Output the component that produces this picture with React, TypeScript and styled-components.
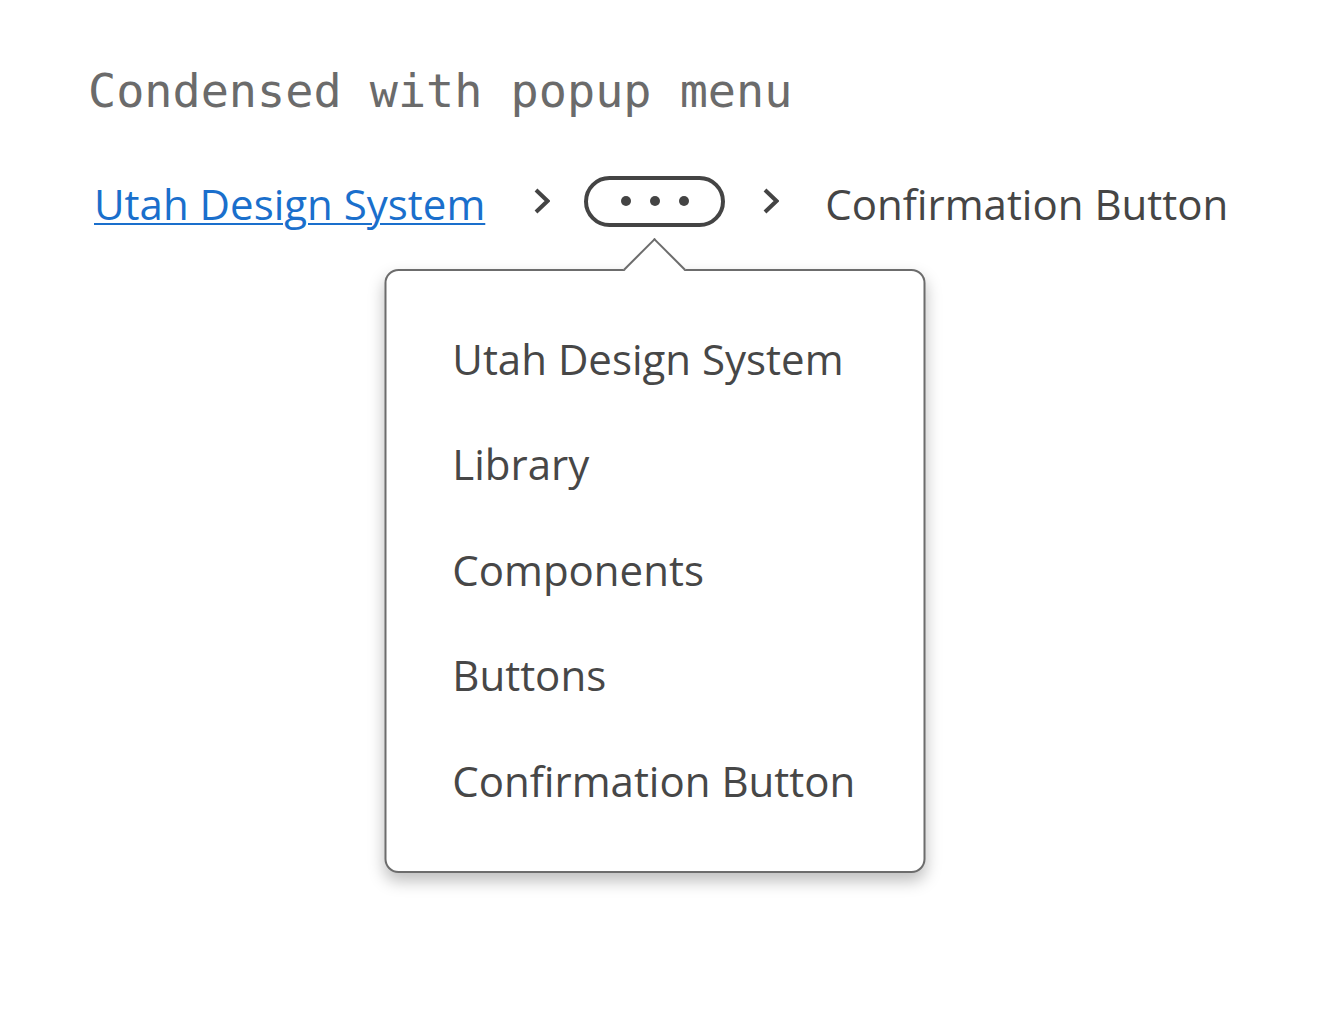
import React from "react";
import styled, { createGlobalStyle } from "styled-components";

const GlobalStyle = createGlobalStyle`
  html, body {
    margin: 0;
    padding: 0;
    background: #ffffff;
  }
  * { box-sizing: border-box; }
`;

const Page = styled.main`
  min-height: 1022px;
  padding: 68px 0 0 88px;
  font-family: "Open Sans", "Noto Sans", sans-serif;
`;

const Title = styled.h2`
  margin: 0;
  font-family: "DejaVu Sans Mono", "Liberation Mono", monospace;
  font-weight: 400;
  font-size: 46.8px;
  line-height: 46.5px;
  color: #6b6b6b;
`;

const Row = styled.nav`
  display: flex;
  align-items: center;
  margin-top: 61px;
  height: 51px;
`;

const CrumbLink = styled.a`
  font-size: 42px;
  line-height: 51px;
  color: #1a6fcc;
  text-decoration: underline;
  text-decoration-thickness: 2px;
  text-underline-offset: 3px;
  margin-left: 6px;
  padding-top: 4px;
`;

const Current = styled.span`
  font-size: 42px;
  line-height: 51px;
  color: #454545;
  padding-top: 4px;
`;

const Sep = styled.span<{ $left: number; $right: number }>`
  display: flex;
  margin: 0 ${(p) => p.$right}px 0 ${(p) => p.$left}px;
  svg { display: block; }
`;

const MoreWrap = styled.div`
  position: relative;
  height: 51px;
`;

const MoreButton = styled.button`
  display: flex;
  align-items: center;
  justify-content: center;
  gap: 19px;
  width: 141px;
  height: 51px;
  padding: 0;
  border: 4px solid #444444;
  border-radius: 26px;
  background: #ffffff;
  cursor: pointer;
`;

const Dot = styled.span`
  width: 10px;
  height: 10px;
  border-radius: 50%;
  background: #444444;
`;

const Popup = styled.div`
  position: absolute;
  top: calc(100% + 42px);
  left: 50%;
  transform: translateX(-50%);
  width: 541px;
  height: 604px;
  background: #ffffff;
  border: 2px solid #6c6c6c;
  border-radius: 14px;
  box-shadow: 0 8px 16px rgba(0, 0, 0, 0.26);
  z-index: 2;
`;

const Arrow = styled.span`
  position: absolute;
  top: -2px;
  left: 50%;
  width: 44px;
  height: 44px;
  background: #ffffff;
  border-top: 2px solid #6c6c6c;
  border-left: 2px solid #6c6c6c;
  transform: translate(-50%, -50%) rotate(45deg);
`;

const MenuList = styled.ul`
  position: relative;
  list-style: none;
  margin: 0;
  padding: 35px 0 0 66px;
`;

const MenuItem = styled.li`
  font-size: 42px;
  line-height: 105.5px;
  color: #474747;
  white-space: nowrap;
`;

const Chevron = () => (
  <svg width="16" height="26" viewBox="0 0 16 26" fill="none">
    <polyline
      points="2,2 13.5,13 2,24"
      stroke="#444444"
      strokeWidth="4"
      strokeLinecap="butt"
      strokeLinejoin="miter"
    />
  </svg>
);

const items = [
  "Utah Design System",
  "Library",
  "Components",
  "Buttons",
  "Confirmation Button",
];

export default function App() {
  return (
    <>
      <GlobalStyle />
      <Page>
        <Title>Condensed with popup menu</Title>
        <Row aria-label="Breadcrumb">
          <CrumbLink href="#">Utah Design System</CrumbLink>
          <Sep $left={49} $right={34}>
            <Chevron />
          </Sep>
          <MoreWrap>
            <MoreButton aria-label="Show more">
              <Dot />
              <Dot />
              <Dot />
            </MoreButton>
            <Popup role="menu">
              <Arrow />
              <MenuList>
                {items.map((it) => (
                  <MenuItem key={it}>{it}</MenuItem>
                ))}
              </MenuList>
            </Popup>
          </MoreWrap>
          <Sep $left={38} $right={46}>
            <Chevron />
          </Sep>
          <Current>Confirmation Button</Current>
        </Row>
      </Page>
    </>
  );
}
